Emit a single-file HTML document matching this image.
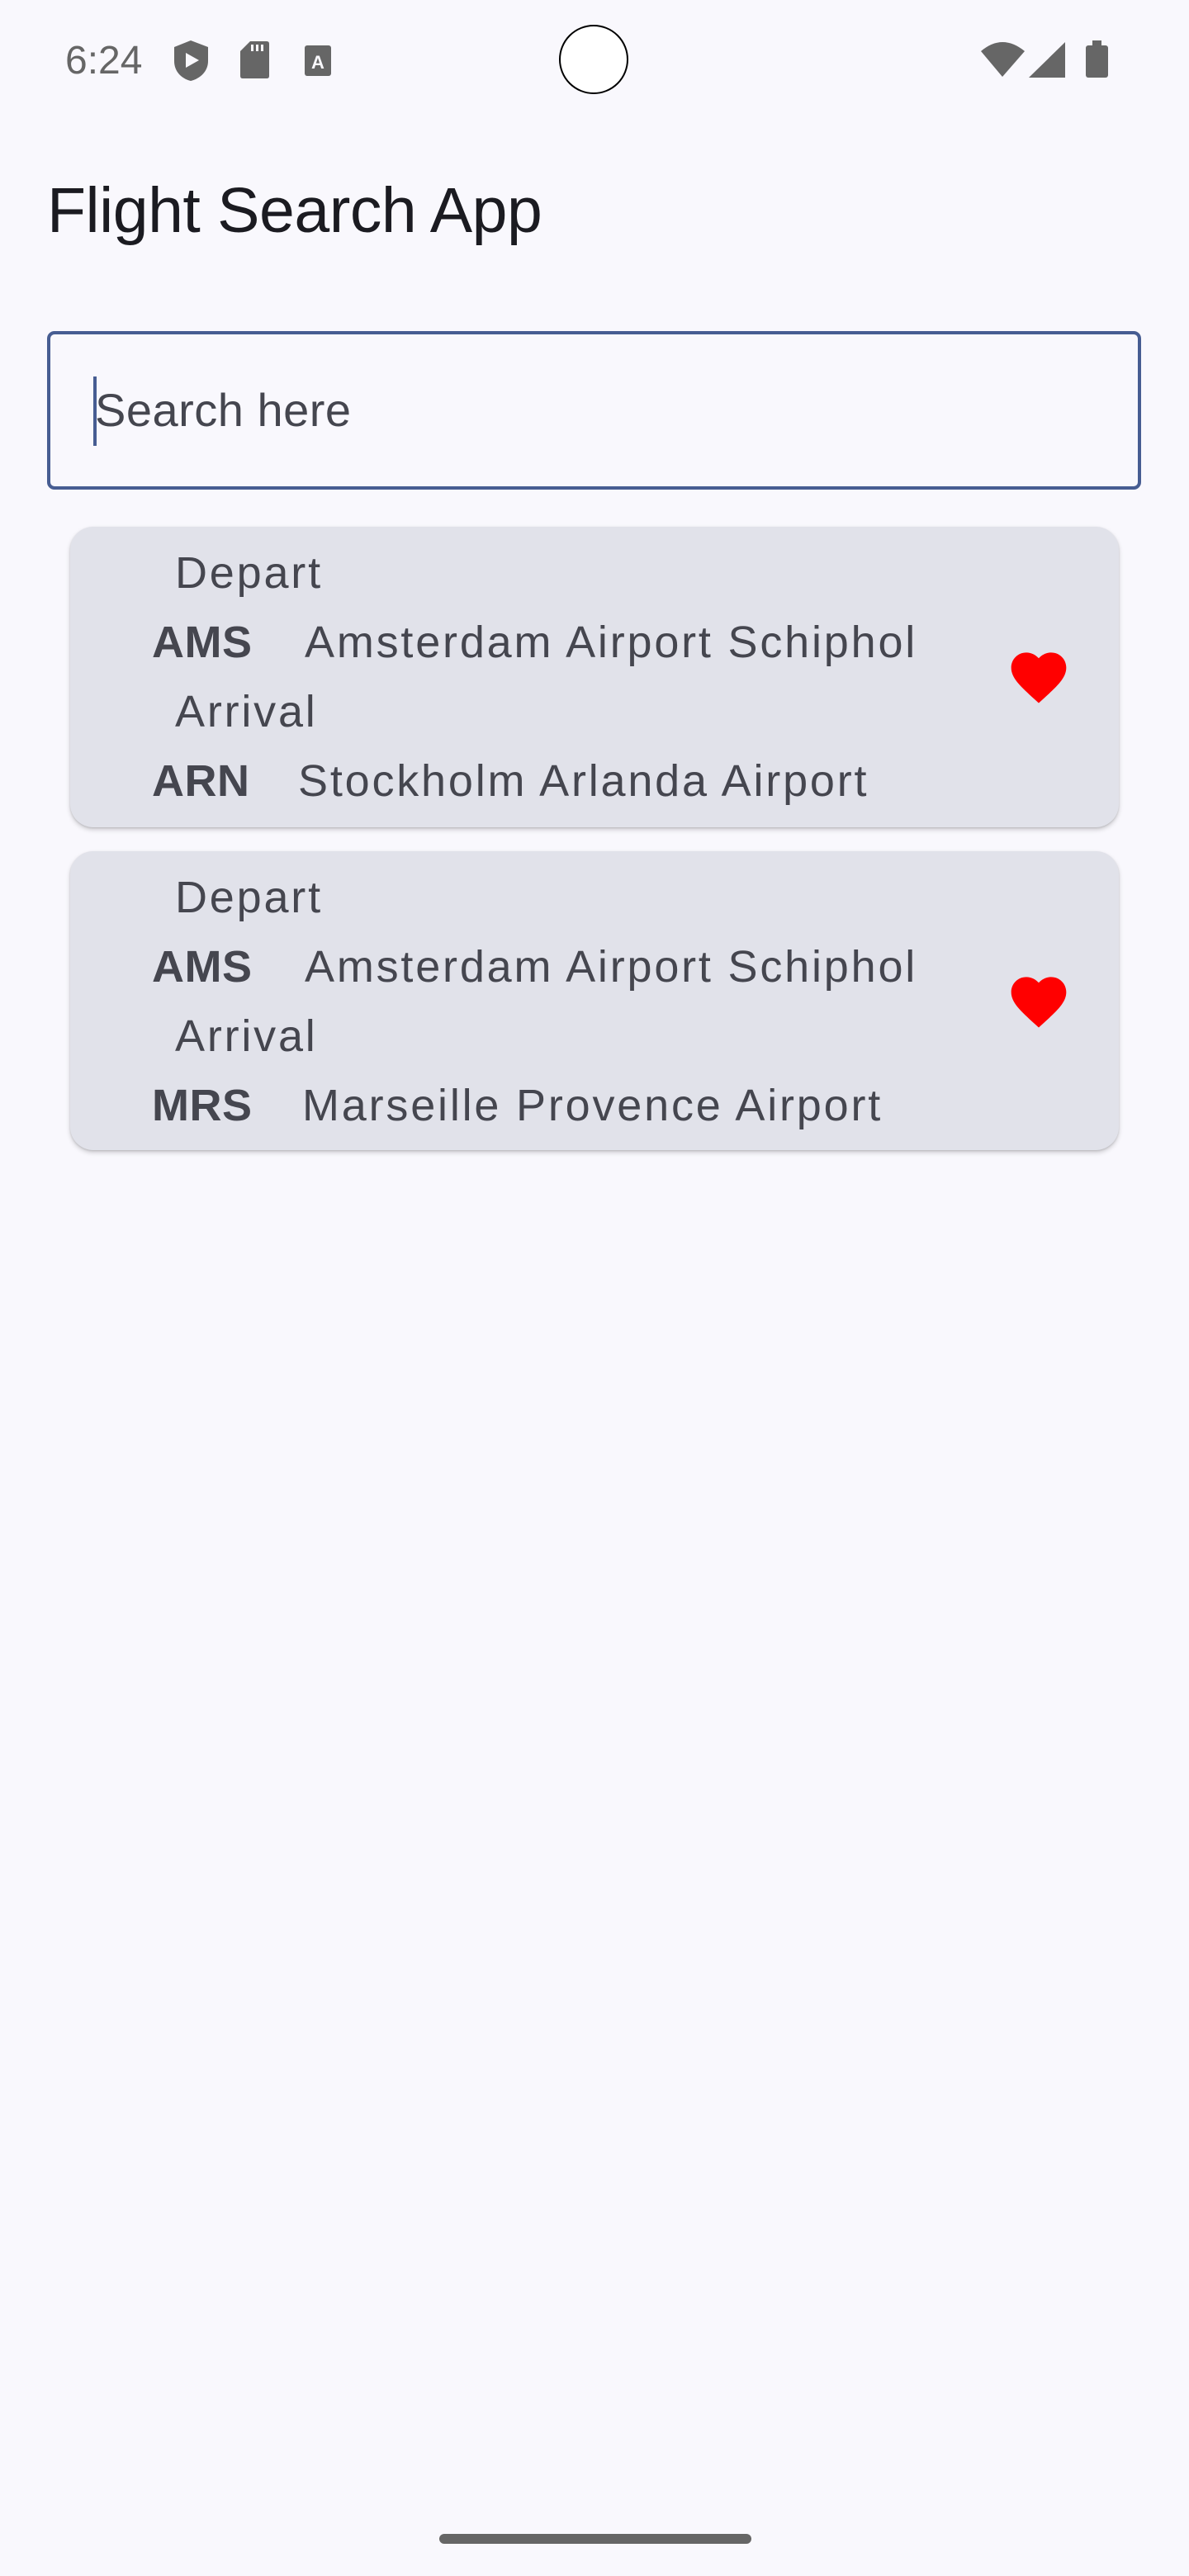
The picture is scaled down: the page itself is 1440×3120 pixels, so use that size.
<!DOCTYPE html>
<html><head><meta charset="utf-8"><style>
html,body{margin:0;padding:0;}
body{width:1440px;height:3120px;background:#f9f8fd;position:relative;overflow:hidden;font-family:"Liberation Sans",sans-serif;}
.abs{position:absolute;}
.t{position:absolute;white-space:nowrap;color:#45464f;}
.r{font-size:54px;line-height:60px;letter-spacing:2.8px;}
.b{font-size:54px;line-height:60px;font-weight:bold;letter-spacing:0.5px;}
.card{position:absolute;left:85px;width:1270px;background:#e1e2ea;border-radius:28px;box-shadow:0 3px 6px rgba(0,0,0,0.18),0 1px 2px rgba(0,0,0,0.12);}
</style></head><body>
<div class="t" style="left:79px;top:46px;font-size:48px;color:#666;line-height:56px;">6:24</div>
<svg class="abs" style="left:205px;top:44px" width="210" height="60" viewBox="205 44 210 60">
<path d="M231 49 L252 57 V74 C252 86 243 95 231 98 C219 95 211 86 211 74 V57 Z" fill="#666"/>
<path d="M225 64 L241 73 L225 82 Z" fill="#f9f8fd"/>
<path d="M303 50 H323 Q326 50 326 53 V92 Q326 95 323 95 H294 Q291 95 291 92 V62 Z" fill="#666"/>
<rect x="304" y="54" width="3" height="8" fill="#f9f8fd"/><rect x="310" y="54" width="3" height="8" fill="#f9f8fd"/><rect x="316" y="54" width="3" height="8" fill="#f9f8fd"/>
<rect x="369" y="55" width="32" height="37" rx="3" fill="#666"/>
<text x="385" y="83" font-size="22" font-weight="bold" fill="#f9f8fd" text-anchor="middle" font-family="Liberation Sans">A</text>
</svg>
<div class="abs" style="left:677px;top:30px;width:84px;height:84px;border-radius:50%;background:#fff;border:2px solid #000;box-sizing:border-box;"></div>
<svg class="abs" style="left:1180px;top:40px" width="170" height="60" viewBox="1180 40 170 60">
<path d="M1188 62 Q1214 40 1241 62 L1214 93 Z" fill="#666"/>
<path d="M1246 94 L1290 51 V94 Z" fill="#666"/>
<rect x="1315" y="55" width="27" height="39" rx="3" fill="#666"/>
<rect x="1323" y="49" width="11" height="8" fill="#666"/>
</svg>
<div class="t" style="left:57px;top:210px;font-size:77px;color:#1b1b21;letter-spacing:-0.5px;line-height:90px;">Flight Search App</div>
<div class="abs" style="left:57px;top:401px;width:1325px;height:192px;border:4px solid #475d92;border-radius:9px;box-sizing:border-box;"></div>
<div class="abs" style="left:113px;top:456px;width:4px;height:84px;background:#475d92;"></div>
<div class="t" style="left:115px;top:467px;font-size:56px;line-height:60px;letter-spacing:0.5px;">Search here</div>

<div class="card" style="top:638px;height:364px;"></div>
<div class="card" style="top:1031px;height:362px;"></div>

<div class="t r" style="left:212px;top:664px;">Depart</div>
<div class="t b" style="left:184px;top:748px;">AMS</div>
<div class="t r" style="left:369px;top:748px;">Amsterdam Airport Schiphol</div>
<div class="t r" style="left:212px;top:832px;">Arrival</div>
<div class="t b" style="left:184px;top:916px;">ARN</div>
<div class="t r" style="left:361px;top:916px;">Stockholm Arlanda Airport</div>

<div class="t r" style="left:212px;top:1057px;">Depart</div>
<div class="t b" style="left:184px;top:1141px;">AMS</div>
<div class="t r" style="left:369px;top:1141px;">Amsterdam Airport Schiphol</div>
<div class="t r" style="left:212px;top:1225px;">Arrival</div>
<div class="t b" style="left:184px;top:1309px;">MRS</div>
<div class="t r" style="left:366px;top:1309px;">Marseille Provence Airport</div>

<svg class="abs" style="left:1218px;top:780px" width="80" height="74" viewBox="0 0 24 22"><path d="M12 21.35l-1.45-1.32C5.4 15.36 2 12.28 2 8.5 2 5.42 4.42 3 7.5 3c1.74 0 3.410.81 4.5 2.09C13.09 3.81 14.76 3 16.5 3 19.58 3 22 5.420 22 8.5c0 3.78-3.4 6.86-8.55 11.54L12 21.35z" fill="#ff0000"/></svg>
<svg class="abs" style="left:1218px;top:1173px" width="80" height="74" viewBox="0 0 24 22"><path d="M12 21.35l-1.45-1.32C5.4 15.36 2 12.28 2 8.5 2 5.42 4.42 3 7.5 3c1.74 0 3.41.81 4.5 2.09C13.09 3.81 14.76 3 16.5 3 19.58 3 22 5.42 22 8.5c0 3.78-3.4 6.86-8.55 11.54L12 21.35z" fill="#ff0000"/></svg>

<div class="abs" style="left:532px;top:3069px;width:378px;height:12px;border-radius:6px;background:#666;"></div>
</body></html>
